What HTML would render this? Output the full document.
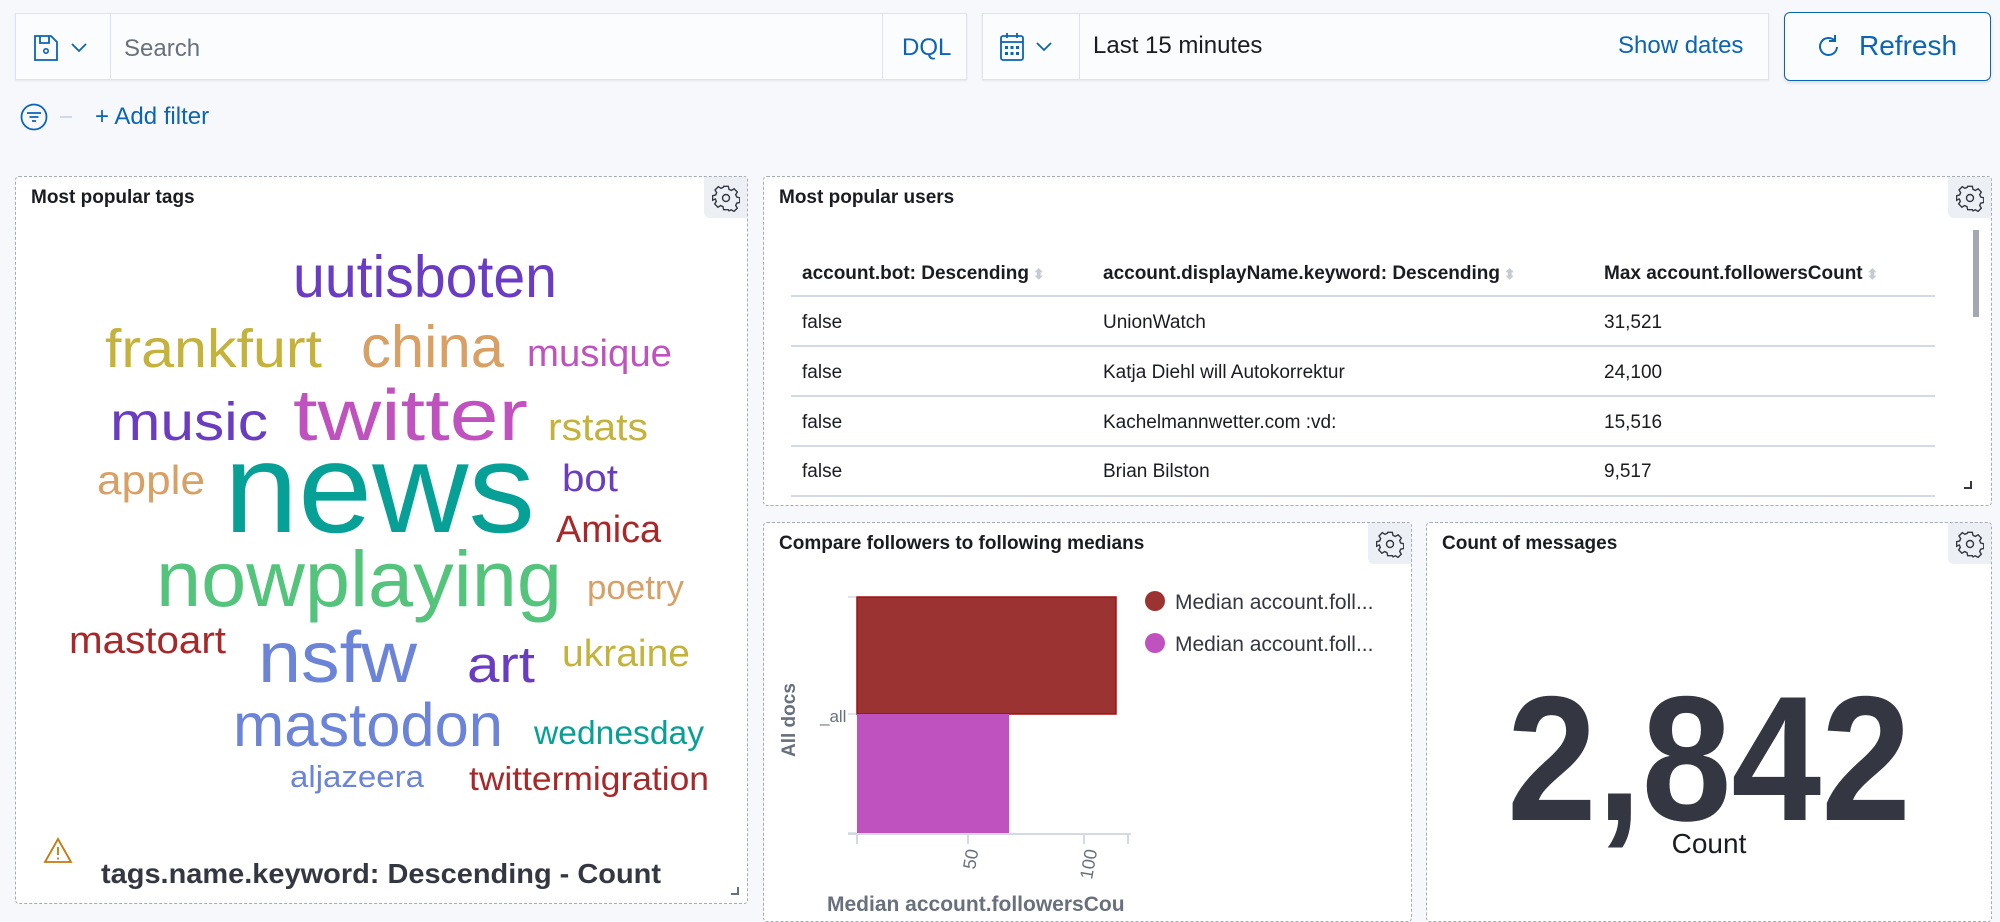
<!DOCTYPE html>
<html><head><meta charset="utf-8">
<style>
*{box-sizing:border-box;margin:0;padding:0}
html,body{width:2000px;height:913px;overflow:hidden;background:#f7f8fc;font-family:"Liberation Sans",sans-serif;color:#1a1c21}
.abs{position:absolute}
.bar{background:#fbfcfd;border:1px solid #dfe3ec;box-shadow:0 1px 2px rgba(0,0,0,.08)}
.panel{position:absolute;background:#fff;border:1.5px dashed #a3abb9;border-radius:4px;overflow:hidden}
.ptitle{position:absolute;left:15px;top:10px;font-weight:bold;font-size:19px;color:#1a1c21}
.gear{position:absolute;right:0;top:0;width:43px;height:41px;background:#eceff3;border-radius:0 0 0 6px;display:flex;align-items:center;justify-content:center}
.blue{color:#0b64b5}
</style></head><body>

<div class="abs bar" style="left:15px;top:13px;width:952px;height:67px"></div>
<div class="abs" style="left:110px;top:13px;width:1px;height:67px;background:#dfe3ec"></div>
<div class="abs" style="left:882px;top:13px;width:1px;height:67px;background:#dfe3ec"></div>
<svg class="abs" style="left:33px;top:35px" width="60" height="26" viewBox="0 0 60 26">
 <path d="M2 1h16l6 6v18H2z" fill="none" stroke="#0b64b5" stroke-width="1.8"/>
 <path d="M7 1v7h9V1" fill="none" stroke="#0b64b5" stroke-width="1.8"/>
 <circle cx="13" cy="16" r="2.2" fill="none" stroke="#0b64b5" stroke-width="1.6"/>
 <path d="M39 9l7 7 7-7" fill="none" stroke="#0b64b5" stroke-width="1.8"/>
</svg>
<div class="abs" style="left:124px;top:35px;font-size:24px;color:#69707d">Search</div>
<div class="abs blue" style="left:902px;top:34px;font-size:24px">DQL</div>

<div class="abs bar" style="left:982px;top:13px;width:787px;height:67px"></div>
<div class="abs" style="left:1079px;top:13px;width:1px;height:67px;background:#dfe3ec"></div>
<svg class="abs" style="left:999px;top:32px" width="64" height="30" viewBox="0 0 64 30">
 <rect x="2" y="4" width="22" height="24" rx="2" fill="none" stroke="#0b64b5" stroke-width="1.8"/>
 <path d="M2 10h22M8 1v5M18 1v5" stroke="#0b64b5" stroke-width="1.8"/>
 <g fill="#0b64b5"><rect x="6" y="14" width="3" height="3"/><rect x="11.5" y="14" width="3" height="3"/><rect x="17" y="14" width="3" height="3"/><rect x="6" y="20" width="3" height="3"/><rect x="11.5" y="20" width="3" height="3"/><rect x="17" y="20" width="3" height="3"/></g>
 <path d="M38 11l7 7 7-7" fill="none" stroke="#0b64b5" stroke-width="1.8"/>
</svg>
<div class="abs" style="left:1093px;top:32px;font-size:24px;color:#1a1c21">Last 15 minutes</div>
<div class="abs blue" style="left:1618px;top:32px;font-size:24px">Show dates</div>

<div class="abs" style="left:1784px;top:12px;width:207px;height:69px;border:1.5px solid #0b64b5;border-radius:6px;background:#fbfcfd;box-shadow:0 2px 3px rgba(0,0,0,.1)"></div>
<svg class="abs" style="left:1816px;top:33px" width="26" height="26" viewBox="0 0 26 26">
 <path d="M19 8A8.5 8.5 0 1 0 21 14" fill="none" stroke="#0b64b5" stroke-width="2"/>
 <path d="M19 2v6h-6" fill="none" stroke="#0b64b5" stroke-width="2"/>
</svg>
<div class="abs blue" style="left:1859px;top:30px;font-size:28px">Refresh</div>

<svg class="abs" style="left:20px;top:103px" width="60" height="28" viewBox="0 0 60 28">
 <circle cx="14" cy="14" r="12.5" fill="none" stroke="#0b64b5" stroke-width="1.8"/>
 <path d="M7 10h14M9.5 14h9M12 18h4" stroke="#0b64b5" stroke-width="1.8"/>
 <path d="M40 14h12" stroke="#d3dae6" stroke-width="2"/>
</svg>
<div class="abs blue" style="left:95px;top:103px;font-size:24px">+ Add filter</div>

<div class="panel" style="left:15px;top:176px;width:733px;height:728px">
 <div class="ptitle">Most popular tags</div>
 <div class="gear"><svg width="28" height="28" viewBox="0 0 24 24"><path d="M10 2h4l.6 2.6 2 .9 2.3-1.4 2.8 2.8-1.4 2.3.9 2 2.6.6v4l-2.6.6-.9 2 1.4 2.3-2.8 2.8-2.3-1.4-2 .9L14 22h-4l-.6-2.6-2-.9-2.3 1.4-2.8-2.8 1.4-2.3-.9-2L0.5 14v-4l2.6-.6.9-2L2.6 5.1 5.4 2.3l2.3 1.4 2-.9z" fill="none" stroke="#343741" stroke-width="1.2"/><circle cx="12" cy="12" r="3" fill="none" stroke="#343741" stroke-width="1.2"/></svg></div>
 <svg class="abs" style="left:27px;top:660px" width="30" height="28" viewBox="0 0 30 28"><path d="M15 2L28 25H2z" fill="none" stroke="#c9780e" stroke-width="1.8"/><path d="M15 10v8M15 20.5v2" stroke="#c9780e" stroke-width="1.8"/></svg>
 <div class="abs" style="right:8px;bottom:8px;width:8px;height:8px;border-right:2px solid #69707d;border-bottom:2px solid #69707d"></div>
</div>

<svg class="abs" style="left:0;top:0" width="2000" height="913" font-family="Liberation Sans, sans-serif">
<text x="293" y="297" font-size="59" fill="#6a3cc4" textLength="264" lengthAdjust="spacingAndGlyphs">uutisboten</text>
<text x="105" y="367" font-size="54" fill="#c4b23a" textLength="217" lengthAdjust="spacingAndGlyphs">frankfurt</text>
<text x="361" y="367" font-size="59" fill="#d9a065" textLength="143" lengthAdjust="spacingAndGlyphs">china</text>
<text x="527" y="366" font-size="38" fill="#c052c0" textLength="145" lengthAdjust="spacingAndGlyphs">musique</text>
<text x="110" y="440" font-size="54" fill="#6a3cc0" textLength="158" lengthAdjust="spacingAndGlyphs">music</text>
<text x="293" y="440" font-size="72" fill="#c052c0" textLength="235" lengthAdjust="spacingAndGlyphs">twitter</text>
<text x="548" y="440" font-size="38" fill="#c4b23a" textLength="100" lengthAdjust="spacingAndGlyphs">rstats</text>
<text x="97" y="494" font-size="41" fill="#d9a065" textLength="108" lengthAdjust="spacingAndGlyphs">apple</text>
<text x="224" y="532" font-size="128" fill="#07a096" textLength="311" lengthAdjust="spacingAndGlyphs">news</text>
<text x="562" y="491" font-size="38" fill="#6a3cc0" textLength="56" lengthAdjust="spacingAndGlyphs">bot</text>
<text x="556" y="542" font-size="38" fill="#a8282a" textLength="105" lengthAdjust="spacingAndGlyphs">Amica</text>
<text x="156" y="606" font-size="79" fill="#54c47c" textLength="406" lengthAdjust="spacingAndGlyphs">nowplaying</text>
<text x="587" y="599" font-size="34" fill="#d9a065" textLength="97" lengthAdjust="spacingAndGlyphs">poetry</text>
<text x="69" y="653" font-size="38" fill="#a8282a" textLength="157" lengthAdjust="spacingAndGlyphs">mastoart</text>
<text x="258" y="682" font-size="72" fill="#6b84d8" textLength="159" lengthAdjust="spacingAndGlyphs">nsfw</text>
<text x="467" y="682" font-size="51" fill="#6a3cc0" textLength="68" lengthAdjust="spacingAndGlyphs">art</text>
<text x="562" y="666" font-size="38" fill="#c4b23a" textLength="128" lengthAdjust="spacingAndGlyphs">ukraine</text>
<text x="233" y="746" font-size="61" fill="#6b84d8" textLength="270" lengthAdjust="spacingAndGlyphs">mastodon</text>
<text x="534" y="744" font-size="33" fill="#07a096" textLength="170" lengthAdjust="spacingAndGlyphs">wednesday</text>
<text x="290" y="787" font-size="31" fill="#6b84d8" textLength="134" lengthAdjust="spacingAndGlyphs">aljazeera</text>
<text x="469" y="790" font-size="33" fill="#a8282a" textLength="240" lengthAdjust="spacingAndGlyphs">twittermigration</text>
<text x="101" y="883" font-size="28" font-weight="bold" fill="#343741" textLength="560" lengthAdjust="spacingAndGlyphs">tags.name.keyword: Descending - Count</text>
</svg>

<div class="panel" style="left:763px;top:176px;width:1229px;height:330px">
 <div class="ptitle">Most popular users</div>
 <div class="gear"><svg width="28" height="28" viewBox="0 0 24 24"><path d="M10 2h4l.6 2.6 2 .9 2.3-1.4 2.8 2.8-1.4 2.3.9 2 2.6.6v4l-2.6.6-.9 2 1.4 2.3-2.8 2.8-2.3-1.4-2 .9L14 22h-4l-.6-2.6-2-.9-2.3 1.4-2.8-2.8 1.4-2.3-.9-2L0.5 14v-4l2.6-.6.9-2L2.6 5.1 5.4 2.3l2.3 1.4 2-.9z" fill="none" stroke="#343741" stroke-width="1.2"/><circle cx="12" cy="12" r="3" fill="none" stroke="#343741" stroke-width="1.2"/></svg></div>
 <div class="abs" style="left:1209px;top:53px;width:6px;height:87px;background:#a3a9b3"></div>
 <div class="abs" style="left:1200px;top:304px;width:8px;height:8px;border-right:2px solid #343741;border-bottom:2px solid #343741"></div>
 <div class="abs" style="left:27px;top:118px;width:1144px;font-size:19px">
  <div style="position:relative;height:0">
   <div class="abs" style="left:11px;top:-32px;font-weight:bold;white-space:nowrap">account.bot: Descending<span style="color:#c5cad3;font-size:14px"> ⬍</span></div>
   <div class="abs" style="left:312px;top:-32px;font-weight:bold;white-space:nowrap">account.displayName.keyword: Descending<span style="color:#c5cad3;font-size:14px"> ⬍</span></div>
   <div class="abs" style="left:813px;top:-32px;font-weight:bold;white-space:nowrap">Max account.followersCount<span style="color:#c5cad3;font-size:14px"> ⬍</span></div>
   <div class="abs" style="left:0;top:0;width:1144px;height:2px;background:#d3dae6"></div>
   <div class="abs" style="left:11px;top:17px">false</div><div class="abs" style="left:312px;top:17px">UnionWatch</div><div class="abs" style="left:813px;top:17px">31,521</div>
   <div class="abs" style="left:0;top:50px;width:1144px;height:2px;background:#d3dae6"></div>
   <div class="abs" style="left:11px;top:67px">false</div><div class="abs" style="left:312px;top:67px">Katja Diehl will Autokorrektur</div><div class="abs" style="left:813px;top:67px">24,100</div>
   <div class="abs" style="left:0;top:100px;width:1144px;height:2px;background:#d3dae6"></div>
   <div class="abs" style="left:11px;top:117px">false</div><div class="abs" style="left:312px;top:117px">Kachelmannwetter.com :vd:</div><div class="abs" style="left:813px;top:117px">15,516</div>
   <div class="abs" style="left:0;top:150px;width:1144px;height:2px;background:#d3dae6"></div>
   <div class="abs" style="left:11px;top:166px">false</div><div class="abs" style="left:312px;top:166px">Brian Bilston</div><div class="abs" style="left:813px;top:166px">9,517</div>
   <div class="abs" style="left:0;top:200px;width:1144px;height:2px;background:#d3dae6"></div>
  </div>
 </div>
</div>

<div class="panel" style="left:763px;top:522px;width:649px;height:400px">
 <div class="ptitle">Compare followers to following medians</div>
 <div class="gear"><svg width="28" height="28" viewBox="0 0 24 24"><path d="M10 2h4l.6 2.6 2 .9 2.3-1.4 2.8 2.8-1.4 2.3.9 2 2.6.6v4l-2.6.6-.9 2 1.4 2.3-2.8 2.8-2.3-1.4-2 .9L14 22h-4l-.6-2.6-2-.9-2.3 1.4-2.8-2.8 1.4-2.3-.9-2L0.5 14v-4l2.6-.6.9-2L2.6 5.1 5.4 2.3l2.3 1.4 2-.9z" fill="none" stroke="#343741" stroke-width="1.2"/><circle cx="12" cy="12" r="3" fill="none" stroke="#343741" stroke-width="1.2"/></svg></div>
</div>
<svg class="abs" style="left:0;top:0" width="2000" height="913" font-family="Liberation Sans, sans-serif">
 <rect x="857" y="597" width="259" height="117" fill="#9b3333" stroke="#a31010" stroke-width="1.5"/>
 <rect x="857" y="714" width="152" height="119" fill="#bf52be"/>
 <path d="M848 597h8M848 714h8M848 833h8" stroke="#d3dae6" stroke-width="1.5"/>
 <path d="M848 834H1131M857 834v10M968 834v10M1084 834v10M1128 834v10" stroke="#d3dae6" stroke-width="2"/>
 <text transform="translate(975,870) rotate(-80)" font-size="18" fill="#69707d">50</text>
 <text transform="translate(1092,880) rotate(-80)" font-size="18" fill="#69707d">100</text>
 <text transform="translate(795,757) rotate(-90)" font-size="19" font-weight="bold" fill="#69707d">All docs</text>
 <text x="820" y="722" font-size="17" fill="#69707d">_all</text>
 <text x="827" y="911" font-size="21" font-weight="bold" fill="#69707d">Median account.followersCou</text>
 <rect x="1132" y="880" width="30" height="33" fill="#fff"/>
 <circle cx="1155" cy="601" r="10" fill="#9b3333"/>
 <circle cx="1155" cy="643" r="10" fill="#bf52be"/>
 <text x="1175" y="609" font-size="21" fill="#343741">Median account.foll...</text>
 <text x="1175" y="651" font-size="21" fill="#343741">Median account.foll...</text>
</svg>

<div class="panel" style="left:1426px;top:522px;width:566px;height:400px">
 <div class="ptitle">Count of messages</div>
 <div class="gear"><svg width="28" height="28" viewBox="0 0 24 24"><path d="M10 2h4l.6 2.6 2 .9 2.3-1.4 2.8 2.8-1.4 2.3.9 2 2.6.6v4l-2.6.6-.9 2 1.4 2.3-2.8 2.8-2.3-1.4-2 .9L14 22h-4l-.6-2.6-2-.9-2.3 1.4-2.8-2.8 1.4-2.3-.9-2L0.5 14v-4l2.6-.6.9-2L2.6 5.1 5.4 2.3l2.3 1.4 2-.9z" fill="none" stroke="#343741" stroke-width="1.2"/><circle cx="12" cy="12" r="3" fill="none" stroke="#343741" stroke-width="1.2"/></svg></div>
</div>
<svg class="abs" style="left:0;top:0" width="2000" height="913" font-family="Liberation Sans, sans-serif">
 <text x="1709" y="820" font-size="178" font-weight="bold" fill="#343741" text-anchor="middle" textLength="404" lengthAdjust="spacingAndGlyphs">2,842</text>
 <text x="1709" y="853" font-size="28" fill="#1a1c21" text-anchor="middle">Count</text>
</svg>
</body></html>
